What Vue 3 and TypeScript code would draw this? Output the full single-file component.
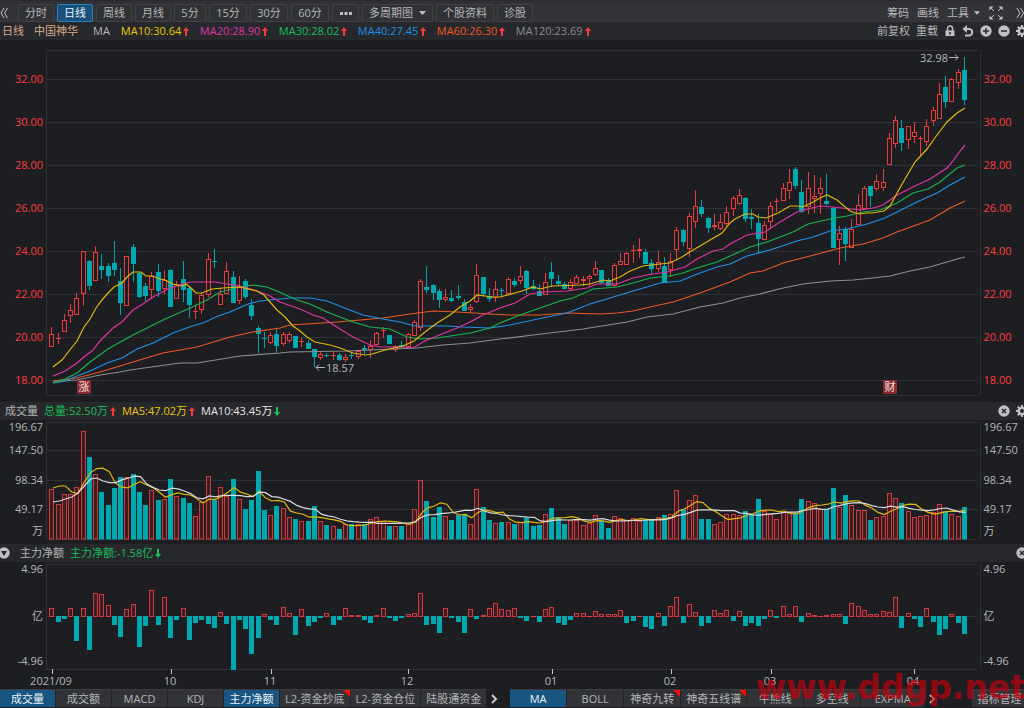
<script setup lang="ts">
import { computed, onBeforeUnmount, onMounted, ref } from 'vue'

type Candle = { up: boolean; x: number; high: number; top: number; bottom: number; low: number }
type Point = [number, number]

const BASE_WIDTH = 1024
const LEFT = 46.5
const RIGHT_AXIS = 44.5

const width = ref(BASE_WIDTH)
const measure = () => { width.value = Math.max(640, document.documentElement.clientWidth) }
onMounted(() => { measure(); window.addEventListener('resize', measure) })
onBeforeUnmount(() => window.removeEventListener('resize', measure))

const right = computed(() => width.value - RIGHT_AXIS)
const sx = (x: number) => LEFT + ((x - LEFT) * (width.value - LEFT - RIGHT_AXIS)) / (BASE_WIDTH - LEFT - RIGHT_AXIS)
const slot = (i: number) => Math.floor(sx(51.8 + 6.25 * i)) + 0.5

/* direction, high, body top, body bottom, low */
const candleData = `
r327,334,347,347 r333,338,339,344 r314,320,332,332 r304,310,316,323 r293,298,315,315 r251,251,294,306 t260,261,286,290
r246,252,281,281 t254,266,270,279 t263,266,276,282 t241,263,270,276 t268,281,303,315 r256,256,306,306 t244,247,264,282
t272,273,297,298 t283,286,296,301 r272,276,290,299 t264,272,291,297 r270,280,289,294 t269,270,307,307 r281,284,299,299
t261,279,290,302 t287,288,305,318 r305,311,312,319 r293,295,310,314 r253,259,295,297 t249,261,262,268 r288,294,305,305
r262,271,294,294 t271,277,303,303 r276,286,301,304 t279,281,297,299 t299,305,316,320 t326,328,334,353 t332,338,339,348
r332,335,343,344 t328,334,346,353 r332,334,344,346 r332,334,341,343 t336,336,348,348 r338,341,342,347 t340,343,349,349
t349,349,357,367 r352,354,358,360 t353,355,356,357 r352,355,356,360 t353,355,360,361 r354,357,360,362 t352,355,356,359
r350,351,357,359 t345,348,350,354 r340,346,350,358 r332,333,345,345 r327,330,330,338 t335,335,344,344 r345,346,350,352
t341,345,347,348 r333,334,347,347 r320,322,336,336 r279,281,328,331 t266,287,290,293 t284,285,293,300 t289,291,300,308
r289,297,300,302 t290,298,301,302 t285,296,298,300 t299,302,311,311 r304,307,310,313 r264,275,302,303 t277,277,294,296
t288,296,299,302 r281,289,298,302 t288,290,291,296 r277,279,294,294 t278,281,285,287 r266,276,281,284 t270,271,288,294
t280,286,289,290 t284,291,296,296 r273,282,295,295 t262,272,279,287 t275,281,284,286 t282,284,289,289 r279,282,289,290
r275,277,284,284 r276,279,281,286 r274,276,279,286 r261,268,275,276 t270,270,283,284 t278,280,286,286 r263,265,286,287
r253,261,265,265 r252,253,265,265 r245,250,251,263 r238,249,251,258 t249,252,264,264 t259,263,269,274 r251,262,269,272
t257,266,283,283 r253,261,270,277 r227,230,250,259 t229,230,242,246 r213,216,249,257 r190,206,222,228 t200,207,214,217
t217,218,228,233 r214,225,227,230 r214,222,229,230 r206,212,224,226 r196,198,209,216 r189,195,204,205 t197,198,219,222
t209,217,219,229 t214,223,239,253 r221,225,240,240 r202,206,222,229 r198,201,202,212 r183,188,201,201 r169,182,191,199
t167,169,186,189 t180,192,212,213 r172,188,207,214 r175,196,199,213 r178,188,194,214 t174,201,204,205 t207,208,248,248
r226,233,240,265 t227,229,244,261 r219,229,248,248 r194,205,225,225 r186,188,209,209 t186,186,196,207 r174,181,189,191
r169,182,188,191 r133,138,165,165 r116,120,144,148 t120,128,143,151 r126,126,140,149 r122,132,137,143 r136,138,139,156
r119,126,142,146 r107,110,121,126 r83,94,119,119 t76,87,102,108 r78,79,102,102 r69,72,83,89 t57,70,100,105`.trim().split(/\s+/)

const candles = computed<Candle[]>(() => candleData.map((raw, i) => {
  const [high, top, bottom, low] = raw.slice(1).split(',').map(Number)
  return { up: raw[0] === 'r', x: slot(i), high, top, bottom, low }
}))

const volume = [
  489, 504, 494, 494, 487, 431, 457, 474, 492, 505, 488, 477, 477, 474, 492, 505, 490, 500, 499, 479, 496, 498, 503, 516,
  502, 476, 500, 487, 496, 479, 499, 509, 500, 471, 510, 515, 506, 508, 517, 519, 521, 521, 506, 521, 525, 526, 529, 524,
  524, 524, 524, 519, 517, 521, 526, 526, 526, 523, 509, 480, 501, 517, 507, 516, 520, 515, 514, 524, 489, 507, 520, 523,
  522, 522, 524, 522, 518, 526, 525, 514, 508, 517, 524, 520, 520, 525, 523, 515, 521, 528, 516, 518, 520, 518, 521, 520,
  520, 517, 515, 514, 490, 509, 500, 495, 519, 519, 524, 522, 514, 514, 515, 511, 515, 499, 511, 514, 519, 512, 512, 513,
  499, 501, 503, 509, 509, 488, 507, 495, 505, 510, 510, 520, 517, 516, 493, 498, 503, 511, 517, 516, 515, 512, 504, 511,
  514, 516, 507,
]

const netFlow = [
  608, 622, 619, 608, 641, 608, 650, 593, 594, 605, 625, 637, 609, 604, 647, 626, 590, 625, 597, 638, 620, 608, 640, 623,
  620, 624, 628, 612, 624, 670, 620, 629, 654, 638, 614, 620, 625, 607, 613, 635, 609, 626, 622, 618, 613, 625, 620, 608,
  615, 615, 620, 623, 615, 608, 618, 621, 618, 614, 613, 593, 625, 624, 633, 608, 618, 622, 633, 609, 619, 615, 608, 603,
  609, 610, 608, 618, 621, 616, 622, 609, 607, 623, 625, 620, 613, 613, 616, 611, 614, 614, 614, 610, 623, 621, 616, 627,
  629, 613, 626, 606, 597, 623, 604, 612, 626, 623, 610, 613, 610, 621, 611, 626, 623, 626, 619, 610, 618, 606, 614, 606,
  622, 613, 615, 616, 615, 614, 614, 624, 603, 606, 610, 614, 614, 611, 612, 597, 628, 613, 619, 627, 608, 622, 635, 629,
  614, 623, 634,
]

const smooth = (seed: number[], n: number) =>
  volume.map((_, i) => (i < seed.length ? seed[i] : volume.slice(i - n + 1, i + 1).reduce((a, b) => a + b, 0) / n))
const volumeLine = (values: number[]) => values.map((y, i) => `${sx(53 + 6.25 * i).toFixed(1)},${y.toFixed(1)}`).join(' ')
const volumeMa5 = smooth([488, 486, 486, 492], 5)
const volumeMa10 = smooth([502, 501, 499, 497, 493, 486, 479, 478, 481], 10)

const averages = [
  { color: '#8b8d90', points: '53,382 77,380 100,375 120,372 130,370 180,363 197,363 240,356 280,353 290,352 347,351 370,350 417,348 443,345 470,343 500,339 533,335 583,329 627,322 647,317 673,314 700,307 723,303 740,298 760,294 783,288 803,284 830,281 853,280 873,278 890,276 910,271 930,267 957,259 965,257' },
  { color: '#ea5a22', points: '53,381 77,378 100,372 120,366 133,362 163,353 197,347 230,337 253,332 280,328 290,325 337,322 383,318 410,314 433,311 457,312 490,314 510,315 540,315 567,313 600,314 617,313 633,311 650,307 673,302 700,293 730,282 750,273 763,271 783,263 810,256 840,248 863,244 883,238 897,232 930,220 950,208 965,201' },
  { color: '#2090e6', points: '53,383 65,381 77,376 90,371 107,363 122,358 137,349 153,343 173,333 192,326 203,323 218,316 230,312 248,304 260,301 280,299 290,298 310,298 327,301 347,309 363,315 383,319 400,322 415,326 447,326 463,327 490,328 510,325 533,320 567,313 590,304 610,298 633,291 660,283 680,281 700,273 717,267 730,264 747,256 770,250 797,241 813,237 830,231 847,229 867,224 885,218 897,212 917,202 937,193 950,185 965,177' },
  { color: '#19b350', points: '53,383 65,379 77,373 90,362 108,349 122,341 133,335 143,330 163,320 190,308 207,300 220,292 240,287 253,285 267,287 277,291 297,300 310,304 327,312 353,322 370,327 390,329 407,337 420,339 437,338 457,335 470,333 490,328 500,323 520,315 540,308 560,301 573,298 593,289 617,287 633,283 650,278 670,276 683,273 697,268 717,262 730,256 750,247 767,242 793,232 808,224 830,219 847,216 863,212 880,210 897,203 913,193 928,189 940,182 957,168 965,165' },
  { color: '#de36a6', points: '53,376 65,371 77,363 85,356 92,351 100,341 113,328 122,322 133,310 143,304 153,297 168,289 183,284 190,282 215,282 240,286 257,291 270,296 280,302 300,309 313,315 323,318 340,329 353,337 370,345 380,347 402,347 413,348 425,341 437,336 457,328 470,322 483,315 500,308 515,303 530,294 543,292 567,291 587,288 597,284 617,284 633,278 647,275 667,272 685,267 697,259 713,251 723,249 730,244 747,235 765,232 780,222 797,212 808,209 820,206 833,207 860,210 873,208 883,205 897,195 917,185 930,179 947,168 953,161 960,151 965,145' },
  { color: '#e0b80c', points: '53,367 62,360 69,351 77,341 84,327 90,319 96,308 102,300 108,293 114,287 122,283 127,277 133,272 141,272 146,276 153,276 160,279 165,280 173,284 182,286 186,284 191,288 196,293 202,293 212,289 223,288 240,287 257,291 264,295 270,302 277,310 285,317 293,326 300,331 307,337 315,342 330,345 340,348 353,353 365,355 372,354 385,350 403,346 414,341 425,332 437,323 450,315 460,307 470,301 477,295 492,297 500,297 522,291 533,287 540,289 552,286 580,285 590,284 603,280 610,281 620,277 630,271 643,266 660,264 670,263 682,257 688,253 700,246 710,240 722,233 730,223 735,219 745,214 753,214 758,217 766,218 778,213 790,206 797,206 803,207 813,202 822,197 827,195 837,200 850,211 859,214 867,213 872,213 884,211 890,206 897,193 905,179 915,162 927,149 937,135 947,122 957,113 965,108' },
]
const toLine = (points: string) =>
  points.split(' ').map(p => p.split(',').map(Number) as Point).map(([x, y]) => `${sx(x).toFixed(1)},${y}`).join(' ')

const prices = [32, 30, 28, 26, 24, 22, 20, 18].map((v, i) => ({ label: v.toFixed(2), y: 79 + 43 * i }))
const volumeLabels = [
  { label: '196.67', y: 427 }, { label: '147.50', y: 450 }, { label: '98.34', y: 480 }, { label: '49.17', y: 509 }, { label: '万', y: 531 },
]
const flowLabels = [{ label: '4.96', y: 569 }, { label: '亿', y: 616 }, { label: '-4.96', y: 661 }]
const months = [
  { label: '2021/09', x: 52 }, { label: '10', x: 171 }, { label: '11', x: 271 }, { label: '12', x: 408 },
  { label: '01', x: 552 }, { label: '02', x: 671 }, { label: '03', x: 771 }, { label: '04', x: 914 },
]

const periods = ['分时', '日线', '周线', '月线', '5分', '15分', '30分', '60分']
const period = ref('日线')
const maLegend = [
  { text: 'MA10:30.64', tone: 'yellow' }, { text: 'MA20:28.90', tone: 'magenta' }, { text: 'MA30:28.02', tone: 'green' },
  { text: 'MA40:27.45', tone: 'blue' }, { text: 'MA60:26.30', tone: 'orange' }, { text: 'MA120:23.69', tone: 'gray' },
]
const subTabs = ['成交量', '成交额', 'MACD', 'KDJ', '主力净额', 'L2-资金抄底', 'L2-资金仓位', '陆股通资金']
const activeSubs = ref(['成交量', '主力净额'])
const mainTabs = ['MA', 'BOLL', '神奇九转', '神奇五线谱', '牛熊线', '多空线', 'EXPMA']
const activeMain = ref('MA')
const flagged = ['L2-资金抄底', '神奇九转', '神奇五线谱']
const toggleSub = (tab: string) => {
  activeSubs.value = activeSubs.value.includes(tab) ? activeSubs.value.filter(t => t !== tab) : [...activeSubs.value, tab]
}
const gearTeeth = [0, 45, 90, 135, 180, 225, 270, 315]
</script>

<template>
  <main class="app">
    <nav class="toolbar">
      <button class="plain edge" aria-label="收起">
        <svg width="8" height="12" viewBox="0 0 8 12"><path class="line" d="M4 1L1 6l3 5M7.5 1l-3 5 3 5" /></svg>
      </button>
      <button v-for="p in periods" :key="p" class="period" :class="{ active: p === period, numeric: p.length === 3 }" @click="period = p">{{ p }}</button>
      <button class="period more" aria-label="更多周期">
        <svg width="12" height="3" viewBox="0 0 12 3"><path class="solid" d="M0 0h3v3H0zM4.500 0h3v3h-3zM9 0h3v3H9z" /></svg>
      </button>
      <button class="period drop">多周期图<svg width="7" height="4" viewBox="0 0 7 4"><path class="solid" d="M0 0h7L3.500 4z" /></svg></button>
      <button class="period">个股资料</button>
      <button class="period">诊股</button>
      <span class="spacer"></span>
      <button class="plain tool">筹码</button>
      <button class="plain tool">画线</button>
      <button class="plain tool drop">工具<svg width="6" height="4" viewBox="0 0 7 4"><path class="solid" d="M0 0h7L3.500 4z" /></svg></button>
      <button class="plain expand" aria-label="全屏">
        <svg width="14" height="14" viewBox="0 0 14 14">
          <path class="line" d="M2 2l3 3M12 2L9 5M2 12l3-3M12 12L9 9" />
          <path class="solid" d="M.5.500h4l-4 4zM13.500.500v4l-4-4zM.5 13.500v-4l4 4zM13.500 13.500h-4l4-4z" />
        </svg>
      </button>
      <button class="plain edge" aria-label="展开">
        <svg width="8" height="12" viewBox="0 0 8 12"><path class="line" d="M1 1l3 5-3 5M4.500 1l3 5-3 5" /></svg>
      </button>
    </nav>

    <header class="strip legend">
      <span class="peach">日线</span>
      <span class="peach stock">中国神华</span>
      <span class="ma">MA</span>
      <span v-for="m in maLegend" :key="m.text" class="reading fixed" :class="m.tone">{{ m.text }}<svg class="arrow" width="6" height="9" viewBox="0 0 6 9"><path class="rise" d="M3 0l3 4H4v5H2V4H0z" /></svg></span>
      <span class="spacer"></span>
      <button class="plain">前复权</button>
      <button class="plain">重载</button>
      <div class="icons">
        <button class="plain" aria-label="锁定">
          <svg width="12" height="12" viewBox="0 0 12 12"><path class="shackle" d="M3.500 6V3.500a2.500 2.500 0 015 0V6" /><path class="solid" fill-rule="evenodd" d="M1.500 5.500h9V11h-9zM5.200 7v2.500h1.600V7z" /></svg>
        </button>
        <button class="plain" aria-label="撤销">
          <svg width="12" height="12" viewBox="0 0 12 12"><path class="thick" d="M3 4h4a3 3 0 010 6.500H3" /><path class="solid" d="M5 0v8L.5 4z" /></svg>
        </button>
        <button class="plain" aria-label="放大">
          <svg width="12" height="12" viewBox="0 0 12 12"><circle class="solid" cx="6" cy="6" r="5.700" /><path class="cut" d="M6 3v6M3 6h6" /></svg>
        </button>
        <button class="plain" aria-label="缩小">
          <svg width="12" height="12" viewBox="0 0 12 12"><circle class="solid" cx="6" cy="6" r="5.700" /><path class="cut" d="M3 6h6" /></svg>
        </button>
        <button class="plain" aria-label="主图设置">
          <svg width="12" height="12" viewBox="0 0 12 12"><circle class="ring" cx="6" cy="6" r="3.200" /><path v-for="a in gearTeeth" :key="a" class="thick" d="M6 0v2.500" :transform="`rotate(${a} 6 6)`" /></svg>
        </button>
      </div>
    </header>

    <svg class="chart" :width="width" height="362" :viewBox="`0 40 ${width} 362`" role="img" aria-label="中国神华日线">
      <path class="grid" :d="`M${LEFT} 395.500V50.500H${right - 1}M${LEFT} 395.500H${right - 1}M${right + 1} 50V396`" />
      <path v-for="p in prices" :key="p.y" class="grid" :d="`M${LEFT} ${p.y + 0.5}H${right - 2}`" />
      <g class="price-axis">
        <text v-for="p in prices" :key="p.y" x="43" :y="p.y + 4" text-anchor="end">{{ p.label }}</text>
        <text v-for="p in prices" :key="-p.y" :x="right + 4" :y="p.y + 4">{{ p.label }}</text>
      </g>
      <g v-for="(c, i) in candles" :key="i" :class="c.up ? 'up' : 'down'">
        <path v-if="c.up" :d="`M${c.x} ${c.high}V${c.top}M${c.x} ${c.bottom}V${c.low}`" />
        <path v-else :d="`M${c.x} ${c.high}V${c.low}`" />
        <path v-if="c.bottom - c.top < 2" :d="`M${c.x - 2.5} ${c.top + 0.5}h5`" />
        <rect v-else-if="c.up" :x="c.x - 2" :y="c.top + 0.5" width="4" :height="c.bottom - c.top - 1" />
        <rect v-else class="body" :x="c.x - 2.5" :y="c.top" width="5" :height="c.bottom - c.top" />
      </g>
      <polyline v-for="a in averages" :key="a.color" class="average" :stroke="a.color" :points="toLine(a.points)" />
      <g class="note">
        <path :d="`M${sx(316)} 367.500h9m-6-3l-3 3 3 3`" />
        <text :x="sx(326)" y="372">18.57</text>
        <path :d="`M${sx(949)} 57.500h9m-3-3l3 3-3 3`" />
        <text :x="sx(948)" y="62" text-anchor="end">32.98</text>
      </g>
      <g class="badge">
        <rect :x="sx(77)" y="380" width="14" height="14" rx="1" /><text :x="sx(84)" y="391" text-anchor="middle">涨</text>
        <rect :x="sx(883)" y="380" width="14" height="14" rx="1" /><text :x="sx(890)" y="391" text-anchor="middle">财</text>
      </g>
    </svg>

    <header class="strip volume-head">
      <span>成交量</span>
      <span class="reading green">总量:52.50万<svg class="arrow" width="6" height="9" viewBox="0 0 6 9"><path class="rise" d="M3 0l3 4H4v5H2V4H0z" /></svg></span>
      <span class="reading yellow">MA5:47.02万<svg class="arrow" width="6" height="9" viewBox="0 0 6 9"><path class="rise" d="M3 0l3 4H4v5H2V4H0z" /></svg></span>
      <span class="reading white">MA10:43.45万<svg class="arrow" width="6" height="9" viewBox="0 0 6 9"><path class="fall" d="M3 9l3-4H4V0H2v5H0z" /></svg></span>
      <span class="spacer"></span>
      <div class="icons">
        <button class="plain" aria-label="关闭成交量">
          <svg width="12" height="12" viewBox="0 0 12 12"><circle class="solid" cx="6" cy="6" r="5.700" /><path class="cut" d="M4 4l4 4M8 4L4 8" /></svg>
        </button>
        <button class="plain" aria-label="成交量设置">
          <svg width="12" height="12" viewBox="0 0 12 12"><circle class="ring" cx="6" cy="6" r="3.200" /><path v-for="a in gearTeeth" :key="a" class="thick" d="M6 0v2.500" :transform="`rotate(${a} 6 6)`" /></svg>
        </button>
      </div>
    </header>

    <svg class="chart" :width="width" height="124" :viewBox="`0 420 ${width} 124`" role="img" aria-label="成交量">
      <path class="grid" :d="`M${LEFT} 539.500V422.500H${right - 2}M${LEFT} 450.500H${right - 2}M${LEFT} 480.500H${right - 2}M${LEFT} 509.500H${right - 2}M${LEFT} 539.500H${right - 2}M${right + 1} 422V539`" />
      <g class="gray-axis">
        <text v-for="l in volumeLabels" :key="l.y" x="43" :y="l.y + 4" text-anchor="end">{{ l.label }}</text>
        <text v-for="l in volumeLabels" :key="-l.y" :x="right + 4" :y="l.y + 4">{{ l.label }}</text>
      </g>
      <g v-for="(y, i) in volume" :key="i" :class="candles[i].up ? 'up bar' : 'down bar'">
        <rect v-if="candles[i].up" :x="candles[i].x - 2" :y="y + 0.5" width="4" :height="538.500 - y" />
        <rect v-else class="body" :x="candles[i].x - 2.5" :y="y" width="5" :height="539.500 - y" />
      </g>
      <polyline class="average" stroke="#e0b80c" :points="volumeLine(volumeMa5)" />
      <polyline class="average" stroke="#dadbdc" :points="volumeLine(volumeMa10)" />
    </svg>

    <header class="strip flow-head">
      <button class="plain fold" aria-label="折叠">
        <svg width="12" height="12" viewBox="0 0 12 12"><circle class="solid" cx="6" cy="6" r="5.700" /><path class="hole" d="M3 4h6L6 9z" /></svg>
      </button>
      <span>主力净额</span>
      <span class="reading green">主力净额:-1.58亿<svg class="arrow" width="6" height="9" viewBox="0 0 6 9"><path class="fall" d="M3 9l3-4H4V0H2v5H0z" /></svg></span>
      <span class="spacer"></span>
      <div class="icons">
        <button class="plain" aria-label="关闭主力净额">
          <svg width="12" height="12" viewBox="0 0 12 12"><circle class="solid" cx="6" cy="6" r="5.700" /><path class="cut" d="M4 4l4 4M8 4L4 8" /></svg>
        </button>
      </div>
    </header>

    <svg class="chart" :width="width" height="127" :viewBox="`0 562 ${width} 127`" role="img" aria-label="主力净额">
      <path class="grid" :d="`M${LEFT} 669.500V564.500H${right - 2}M${LEFT} 616.500H${right - 2}M${LEFT} 669.500H${right - 2}M${right + 1} 564V669`" />
      <g class="gray-axis">
        <text v-for="l in flowLabels" :key="l.y" x="43" :y="l.y + 4" text-anchor="end">{{ l.label }}</text>
        <text v-for="l in flowLabels" :key="-l.y" :x="right + 4" :y="l.y + 4">{{ l.label }}</text>
      </g>
      <g v-for="(y, i) in netFlow" :key="i" :class="y < 617 ? 'up bar' : 'down bar'">
        <rect v-if="y < 616" :x="slot(i) - 2" :y="y + 0.5" width="4" :height="616 - y" />
        <path v-else-if="y === 616" :d="`M${slot(i) - 2.5} 616.500h5`" />
        <rect v-else class="body" :x="slot(i) - 2.5" y="616" width="5" :height="y - 616" />
      </g>
      <g class="gray-axis">
        <g v-for="m in months" :key="m.label">
          <path class="tick" :d="`M${Math.floor(sx(m.x)) + 0.5} 669V674`" />
          <text :x="sx(m.x - 1)" y="685" text-anchor="middle">{{ m.label }}</text>
        </g>
      </g>
    </svg>

    <footer class="tabs">
      <button v-for="t in subTabs" :key="t" class="tab" :class="{ active: activeSubs.includes(t), flag: flagged.includes(t) }" @click="toggleSub(t)">{{ t }}</button>
      <button class="plain next" aria-label="更多指标"><svg width="7" height="10" viewBox="0 0 7 10"><path class="chevron" d="M1 1l4 4-4 4" /></svg></button>
      <button v-for="t in mainTabs" :key="t" class="tab main" :class="{ active: t === activeMain, flag: flagged.includes(t), wide: t === 'EXPMA' }" @click="activeMain = t">{{ t }}</button>
      <button class="plain next" aria-label="更多主图指标"><svg width="7" height="10" viewBox="0 0 7 10"><path class="chevron" d="M1 1l4 4-4 4" /></svg></button>
      <span class="spacer"></span>
      <button class="tab manage">指标管理</button>
    </footer>
    <div class="watermark">www.ddgp.net</div>
  </main>
</template>

<style>
body { margin: 0; background: #1d1e22; }
</style>

<style scoped>
.app {
  position: relative;
  display: flex;
  flex-direction: column;
  overflow: hidden;
  min-height: 100vh;
  background: #1d1e22;
  color: #b4b6b9;
  font: 11px/16px "Open Sans", "Noto Sans", "Noto Sans CJK SC", sans-serif;
}
button { font: inherit; color: inherit; cursor: pointer; box-sizing: border-box; white-space: nowrap; }
svg { flex: none; }
.spacer { flex: 1; }
.plain { display: flex; align-items: center; padding: 0; border: 0; background: none; }
.toolbar {
  display: flex;
  align-items: center;
  gap: 3px;
  height: 22px;
  box-sizing: border-box;
  padding-top: 3px;
  border-top: 1px solid #2a2b2f;
  background: linear-gradient(#303135, #35363a);
}
.edge { width: 15px; }
.edge:last-child { width: 8px; }
.period {
  display: flex;
  align-items: center;
  justify-content: center;
  height: 18px;
  min-width: 32px;
  padding: 0 6px;
  border: 1px solid #414246;
  border-radius: 2px;
  background: #313236;
}
.period.numeric { min-width: 38px; }
.period.more { min-width: 27px; }
.period.active { border-color: #2b82bd; background: #18507b; color: #edf4f8; }
.drop { gap: 6px; }
.tool { margin-right: 5px; }
.tool.drop { gap: 5px; margin-right: 6px; }
.expand { margin-right: 10px; }
.strip {
  display: flex;
  align-items: center;
  height: 18px;
  background: #27282c;
}
.legend { padding-left: 2px; }
.stock { margin-left: 10px; }
.ma { margin: 0 11px 0 15px; }
.reading { display: flex; align-items: center; gap: 2px; }
.reading.fixed { width: 79px; }
.legend > .plain { margin-left: 6px; }
.icons { display: flex; gap: 6px; margin: 0 -4px 0 6px; }
.volume-head { gap: 6px; padding-left: 5px; }
.flow-head { gap: 6px; }
.flow-head .fold { margin: 0 4px 0 -2px; }
.peach { color: #d8ac89; }
.yellow { color: #ecc506; }
.magenta { color: #de36a6; }
.green { color: #19bd58; }
.blue { color: #2090e6; }
.orange { color: #ea5a22; }
.gray { color: #8b8d90; }
.white { color: #e4e5e6; }
.chart { display: block; }
.grid { fill: none; stroke: #303135; }
.price-axis { fill: #ff3c3c; }
.gray-axis, .note { fill: #b4b6b9; }
.note path { fill: none; stroke: #b4b6b9; }
.tick { stroke: #c4c6c8; }
.up path, .up rect { fill: none; stroke: #ec3b3c; }
.up.bar rect { fill: #391f23; stroke: #d4383a; }
.down path { stroke: #00a5ac; }
.down .body { fill: #00a8b0; }
.average { fill: none; stroke-width: 1.2px; }
.badge rect { fill: #8c292c; }
.badge text { fill: #f0e4e4; }
.rise { fill: #f63b3b; }
.fall { fill: #19c456; }
.solid { fill: #bfc1c3; }
.line { fill: none; stroke: #bfc1c3; }
.thick { fill: none; stroke: #bfc1c3; stroke-width: 2; }
.shackle { fill: none; stroke: #bfc1c3; stroke-width: 1.500; }
.ring { fill: none; stroke: #bfc1c3; stroke-width: 2.500; }
.cut { fill: none; stroke: #27282c; stroke-width: 1.500; }
.hole { fill: #27282c; }
.chevron { fill: none; stroke: #c6c8ca; stroke-width: 2; }
.tabs { display: flex; height: 19px; background: #1d1e22; }
.tab {
  position: relative;
  min-width: 56px;
  height: 18px;
  padding: 0 5px;
  border: 0;
  border-top: 1px solid #3b3c40;
  border-right: 1px solid #232428;
  background: #323337;
  line-height: 16px;
}
.tab.main { min-width: 57px; }
.tab.active { background: #185581; color: #edf4f8; }
.tab.wide { min-width: 64px; }
.tab.manage { margin-right: -4px; }
.tab.flag::after {
  content: "";
  position: absolute;
  top: 0;
  right: 0;
  border-top: 7px solid #f70b0b;
  border-left: 7px solid transparent;
}
.next { width: 23px; padding-left: 4px; }
.watermark {
  position: absolute;
  right: -2px;
  bottom: 0;
  color: #c8000c;
  font: bold 33px/40px "DejaVu Sans", sans-serif;
  opacity: 0.65;
  pointer-events: none;
}
</style>
